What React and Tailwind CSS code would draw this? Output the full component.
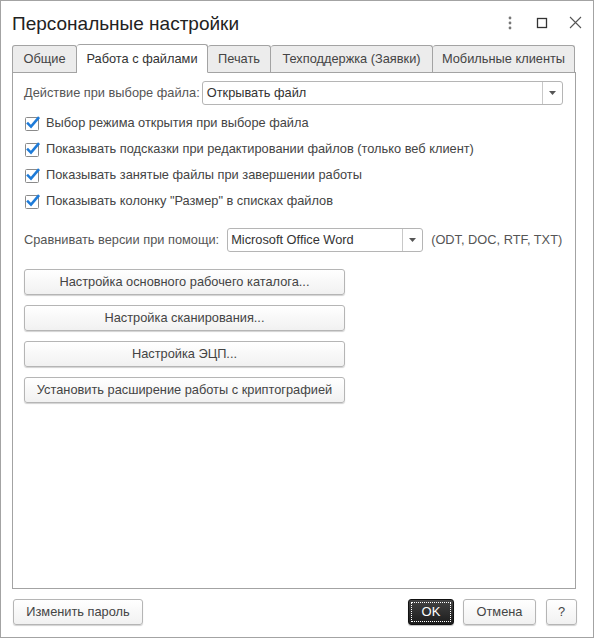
import React from 'react';

const tabs = [
  { label: 'Общие', w: 'w-[65px]' },
  { label: 'Работа с файлами', w: 'w-[131px]', active: true },
  { label: 'Печать', w: 'w-[63px]' },
  { label: 'Техподдержка (Заявки)', w: 'w-[162px]' },
  { label: 'Мобильные клиенты', w: 'w-[142px]' },
];

const checks = [
  'Выбор режима открытия при выборе файла',
  'Показывать подсказки при редактировании файлов (только веб клиент)',
  'Показывать занятые файлы при завершении работы',
  'Показывать колонку "Размер" в списках файлов',
];

const actions = [
  'Настройка основного рабочего каталога...',
  'Настройка сканирования...',
  'Настройка ЭЦП...',
  'Установить расширение работы с криптографией',
];

const Checkbox = () => (
  <svg width="17" height="17" viewBox="0 0 17 17" className="shrink-0">
    <rect x="1.5" y="2.5" width="13" height="13" rx="1" fill="#fff" stroke="#8a8a8a" />
    <path d="M4 8.6 L7 11.6 L14.2 3.2" fill="none" stroke="#1e7bd8" strokeWidth="2.6" strokeLinecap="square" />
  </svg>
);

const Arrow = () => (
  <div className="w-[20px] h-full border-l border-[#c8c8c8] flex items-center justify-center">
    <svg width="7" height="4" viewBox="0 0 7 4">
      <path d="M0 0 H7 L3.5 4 Z" fill="#555" />
    </svg>
  </div>
);

const Btn = ({ children, className = '' }) => (
  <button
    className={`h-[26px] border border-[#b5b5b5] rounded-[3px] bg-gradient-to-b from-white to-[#f1f1f1] shadow-[0_1px_1px_rgba(0,0,0,0.18)] text-[12.8px] text-[#444] ${className}`}
  >
    {children}
  </button>
);

export default function App() {
  return (
    <div
      className="w-[594px] h-[638px] border border-[#a3a3a3] bg-white flex flex-col text-[#444]"
      style={{ fontFamily: '"Liberation Sans", Arial, sans-serif' }}
    >
      {/* title bar */}
      <div className="h-[43px] flex items-center pl-[11px] pr-[11px]">
        <div className="flex-1 text-[19px] text-[#222] leading-none pt-[1px]">Персональные настройки</div>
        <div className="flex items-center gap-[21px]">
          <svg width="10" height="14" viewBox="0 0 10 14">
            <circle cx="5" cy="2" r="1.4" fill="#777" />
            <circle cx="5" cy="7" r="1.4" fill="#777" />
            <circle cx="5" cy="12" r="1.4" fill="#777" />
          </svg>
          <svg width="12" height="12" viewBox="0 0 12 12">
            <rect x="1.5" y="1.5" width="9" height="9" fill="none" stroke="#333" strokeWidth="1.3" />
          </svg>
          <svg width="13" height="13" viewBox="0 0 13 13">
            <path d="M1 1 L12 12 M12 1 L1 12" stroke="#555" strokeWidth="1.1" />
          </svg>
        </div>
      </div>

      {/* tabs */}
      <div className="flex items-end h-[28px] ml-[11px]">
        {tabs.map((t) =>
          t.active ? (
            <div
              key={t.label}
              className={`${t.w} h-[29px] -mb-px relative z-10 bg-white border border-[#a3a3a3] border-b-white border-l-0 rounded-t-[3px] flex items-center justify-center text-[12.8px] text-[#333]`}
            >
              {t.label}
            </div>
          ) : (
            <div
              key={t.label}
              className={`${t.w} h-[27px] bg-[#ececec] border border-[#a3a3a3] border-b-0 border-l-0 first:border-l rounded-t-[3px] flex items-center justify-center text-[12.8px] text-[#444]`}
            >
              {t.label}
            </div>
          )
        )}
      </div>

      {/* panel */}
      <div className="ml-[11px] w-[564px] h-[517px] border border-[#a3a3a3] pl-[11px] pt-[8px] text-[12.8px]">
        <div className="flex items-center h-[24px]">
          <span className="text-[#555] mr-[2px]">Действие при выборе файла:</span>
          <div className="w-[361px] h-[24px] border border-[#b5b5b5] rounded-[3px] flex items-center">
            <span className="flex-1 pl-[4px] text-[#333]">Открывать файл</span>
            <Arrow />
          </div>
        </div>

        <div className="mt-[5px] flex flex-col">
          {checks.map((c) => (
            <div key={c} className="h-[26px] flex items-center">
              <Checkbox />
              <span className="ml-[5px] text-[#444]">{c}</span>
            </div>
          ))}
        </div>

        <div className="mt-[14px] flex items-center h-[24px]">
          <span className="text-[#555] mr-[8px]">Сравнивать версии при помощи:</span>
          <div className="w-[196px] h-[24px] border border-[#b5b5b5] rounded-[3px] flex items-center">
            <span className="flex-1 pl-[3px] text-[#333]">Microsoft Office Word</span>
            <Arrow />
          </div>
          <span className="ml-[8px] text-[#555]">(ODT, DOC, RTF, TXT)</span>
        </div>

        <div className="mt-[17px] flex flex-col gap-[10px] w-[321px]">
          {actions.map((a) => (
            <Btn key={a} className="w-full">
              {a}
            </Btn>
          ))}
        </div>
      </div>

      {/* footer */}
      <div className="flex items-center ml-[12px] mr-[16px] mt-[10px]">
        <Btn className="w-[130px]">Изменить пароль</Btn>
        <div className="flex-1" />
        <button className="w-[46px] h-[26px] rounded-[3px] bg-gradient-to-b from-[#444] to-[#1c1c1c] border border-[#111] p-[2px] shadow-[0_1px_1px_rgba(0,0,0,0.25)]">
          <div className="w-full h-full border border-dotted border-white flex items-center justify-center text-[13px] text-white">
            OK
          </div>
        </button>
        <Btn className="w-[73px] ml-[9px]">Отмена</Btn>
        <Btn className="w-[31px] ml-[10px]">?</Btn>
      </div>
    </div>
  );
}
